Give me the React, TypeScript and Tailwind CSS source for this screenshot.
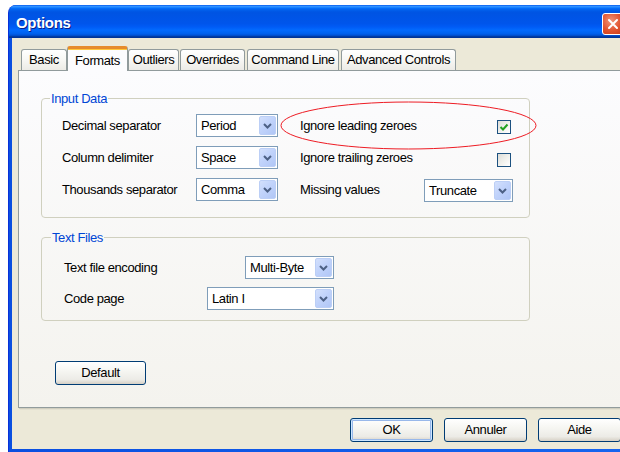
import React from "react";

function Chevron() {
  return (
    <svg width="9" height="6" viewBox="0 0 9 6">
      <path d="M1 1 L4.5 4.5 L8 1" fill="none" stroke="#4d6185" strokeWidth="2" />
    </svg>
  );
}

function Combo({ value, className }: { value: string; className: string }) {
  return (
    <div className={`flex h-[23px] items-center border border-[#7f9db9] bg-white ${className}`}>
      <span className="flex-1 pl-[4px] leading-none">{value}</span>
      <span className="m-[1px] flex h-[19px] w-[17px] items-center justify-center rounded-[2px] border border-[#bccff6] bg-[linear-gradient(135deg,#d3e0fc_0%,#c1d3fb_45%,#b0c6f6_100%)]">
        <Chevron />
      </span>
    </div>
  );
}

function CheckBox({ checked }: { checked?: boolean }) {
  return (
    <span className="flex h-[14px] w-[14px] items-center justify-center border border-[#1c5180] bg-[linear-gradient(135deg,#dcdcd7_0%,#f0f0ec_50%,#ffffff_100%)]">
      {checked && (
        <svg width="10" height="10" viewBox="0 0 10 10">
          <path d="M1.5 5 L4 7.5 L8.5 2.5" fill="none" stroke="#21a121" strokeWidth="2" />
        </svg>
      )}
    </span>
  );
}

function XpButton({ label, className }: { label: string; className: string }) {
  return (
    <button
      className={`flex h-[24px] items-center justify-center rounded-[3px] border border-[#003c74] bg-[linear-gradient(180deg,#ffffff_0%,#f6f6f2_40%,#ecebe6_80%,#d6d0c5_100%)] text-black ${className}`}
    >
      {label}
    </button>
  );
}

function Tab({ label, className, active }: { label: string; className: string; active?: boolean }) {
  if (active) {
    return (
      <div
        className={`flex h-[25px] items-start justify-center rounded-t-[3px] border-x border-t-[3px] border-x-[#919b9c] border-t-[#e68b2c] bg-[#fcfcfe] pt-[2px] shadow-[inset_0_1px_0_#ffc73c] ${className}`}
      >
        {label}
      </div>
    );
  }
  return (
    <div
      className={`mb-[1px] flex h-[21px] items-center justify-center rounded-t-[3px] border-x border-t border-[#919b9c] bg-[linear-gradient(180deg,#ffffff_0%,#f7f7f4_50%,#ecebe6_100%)] ${className}`}
    >
      {label}
    </div>
  );
}

export default function App() {
  return (
    <div className="relative h-[452px] w-[620px] overflow-hidden bg-white pl-[8px] pt-[5px] font-['Liberation_Sans',Arial,sans-serif] text-[13px] tracking-[-0.4px] text-black">
      <div className="flex h-[447px] w-[622px] flex-col overflow-hidden rounded-t-[8px] border-l border-[#0831d9] bg-[linear-gradient(90deg,#0a4fe0_0%,#1665ef_100%)]">
        {/* title bar */}
        <div className="flex h-[33px] shrink-0 items-center justify-between bg-[linear-gradient(180deg,#0058ee_0%,#3593ff_4%,#288eff_6%,#127dff_8%,#036ffc_10%,#0262ee_14%,#0057e5_20%,#0054e3_24%,#0055eb_56%,#005bf5_66%,#026afe_76%,#0062ef_86%,#0052d6_92%,#0040ab_94%,#003092_100%)] pl-[7px] pr-[6px]">
          <span className="pt-[3px] text-[15px] font-bold tracking-[-0.3px] text-white [text-shadow:1px_1px_0_#0a1f8a]">
            Options
          </span>
          <span className="mt-[5px] flex h-[22px] w-[22px] items-center justify-center rounded-[3px] border border-white bg-[radial-gradient(circle_at_40%_35%,#f1957a_0%,#e1532f_55%,#c73a17_100%)]">
            <svg width="12" height="12" viewBox="0 0 12 12">
              <path d="M2 2 L10 10 M10 2 L2 10" stroke="#ffffff" strokeWidth="2" strokeLinecap="round" />
            </svg>
          </span>
        </div>

        {/* client area */}
        <div className="mx-[3px] mb-[3px] flex flex-1 flex-col bg-[#ece9d8] px-[6px] pt-[8px]">
          {/* tab strip */}
          <div className="relative z-10 -mb-[1px] flex h-[25px] items-end pl-[3px]">
            <Tab label="Basic" className="w-[46px]" />
            <Tab label="Formats" active className="w-[61px]" />
            <Tab label="Outliers" className="w-[51px]" />
            <Tab label="Overrides" className="ml-[1px] w-[65px]" />
            <Tab label="Command Line" className="ml-[2px] w-[92px]" />
            <Tab label="Advanced Controls" className="ml-[2px] w-[115px]" />
          </div>

          {/* tab page */}
          <div className="flex h-[338px] flex-col border border-[#919b9c] bg-[linear-gradient(180deg,#fcfcfe_0%,#f4f3ee_100%)] pl-[22px] shadow-[1px_1px_0_#d0cebf,2px_2px_0_#e3e0d0]">
            <fieldset className="mt-[20px] w-[489px] rounded-[4px] border border-[#d0d0bf]">
              <legend className="ml-[8px] px-[1px] leading-[15px] text-[#0046d5]">Input Data</legend>
              <div className="flex flex-col gap-[9px] pb-[16px] pl-[20px] pt-[8px]">
                <div className="flex h-[23px] items-center">
                  <span className="w-[134px]">Decimal separator</span>
                  <Combo value="Period" className="w-[82px]" />
                  <div className="ml-[22px] flex w-[213px] items-center justify-between">
                    <span>Ignore leading zeroes</span>
                    <span className="mr-[2px] mt-[2px]">
                      <CheckBox checked />
                    </span>
                  </div>
                </div>
                <div className="flex h-[23px] items-center">
                  <span className="w-[134px]">Column delimiter</span>
                  <Combo value="Space" className="w-[82px]" />
                  <div className="ml-[22px] flex w-[213px] items-center justify-between">
                    <span>Ignore trailing zeroes</span>
                    <span className="mr-[2px] mt-[4px]">
                      <CheckBox />
                    </span>
                  </div>
                </div>
                <div className="flex h-[23px] items-center">
                  <span className="w-[134px]">Thousands separator</span>
                  <Combo value="Comma" className="w-[82px]" />
                  <div className="ml-[22px] flex w-[213px] items-center justify-between">
                    <span>Missing values</span>
                    <Combo value="Truncate" className="mt-[2px] w-[89px]" />
                  </div>
                </div>
              </div>
            </fieldset>

            <fieldset className="mt-[12px] w-[489px] rounded-[4px] border border-[#d0d0bf]">
              <legend className="ml-[9px] px-[1px] leading-[15px] text-[#0046d5]">Text Files</legend>
              <div className="flex w-[292px] flex-col gap-[8px] pb-[10px] pl-[22px] pt-[11px]">
                <div className="flex h-[23px] items-center justify-between">
                  <span>Text file encoding</span>
                  <Combo value="Multi-Byte" className="w-[89px]" />
                </div>
                <div className="flex h-[23px] items-center justify-between">
                  <span>Code page</span>
                  <Combo value="Latin I" className="w-[127px]" />
                </div>
              </div>
            </fieldset>

            <XpButton label="Default" className="ml-[14px] mt-[40px] w-[91px]" />
          </div>

          {/* dialog buttons */}
          <div className="mt-[10px] flex justify-end gap-[11px]">
            <XpButton
              label="OK"
              className="w-[83px] shadow-[inset_0_0_0_1px_#cee7ff,inset_0_0_0_2px_#98b8ea]"
            />
            <XpButton label="Annuler" className="w-[83px]" />
            <XpButton label="Aide" className="w-[83px]" />
          </div>
        </div>
      </div>

      {/* red highlight ring around the leading-zeroes option */}
      <svg
        className="pointer-events-none absolute left-[280px] top-[101px]"
        width="258"
        height="50"
        viewBox="0 0 258 50"
      >
        <ellipse cx="128.5" cy="24.5" rx="127.5" ry="23.5" fill="none" stroke="#ee1c24" strokeWidth="1" />
      </svg>
    </div>
  );
}
